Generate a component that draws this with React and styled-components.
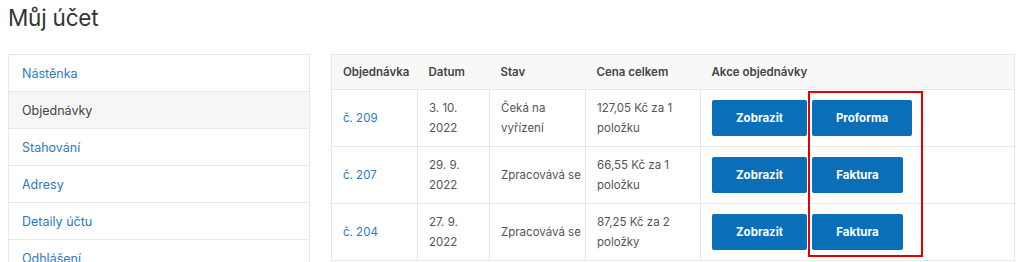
import React from 'react';
import styled, { createGlobalStyle } from 'styled-components';

const GlobalStyle = createGlobalStyle`
  html, body {
    margin: 0;
    padding: 0;
    background: #fff;
    overflow: hidden;
  }
  body {
    font-family: Inter, "Noto Sans", "Liberation Sans", sans-serif;
    color: #444;
  }
`;

const Page = styled.div`
  padding: 0 9px 0 8px;
`;

const Title = styled.h1`
  margin: 4px 0 22px;
  height: 28px;
  font-size: 22.5px;
  line-height: 28px;
  font-weight: 400;
  color: #333;
  letter-spacing: -0.2px;
`;

const Columns = styled.div`
  display: flex;
  align-items: flex-start;
  gap: 21px;
`;

const Sidebar = styled.nav`
  width: 302px;
  flex: none;
  border: 1px solid #e8e8e8;
  border-bottom: none;
  box-sizing: border-box;
`;

const NavItem = styled.a`
  display: flex;
  align-items: center;
  height: 36px;
  padding-left: 13px;
  border-bottom: 1px solid #e8e8e8;
  font-size: 12.5px;
  text-decoration: none;
  color: ${p => (p.$active ? '#444' : '#2b7bbd')};
  background: ${p => (p.$active ? '#f6f6f6' : '#fff')};
`;

const TableWrap = styled.div`
  position: relative;
  width: 684px;
  flex: none;
`;

const Table = styled.table`
  width: 100%;
  border-collapse: collapse;
  border: 1px solid #e8e8e8;
  table-layout: fixed;
  font-size: 11.5px;
`;

const Th = styled.th`
  height: 34px;
  padding: 0 11px;
  text-align: left;
  font-weight: 600;
  color: #444;
  background: #f8f8f8;
  border-bottom: 1px solid #e8e8e8;
`;

const Td = styled.td`
  height: 56px;
  padding: 0 11px;
  border: 1px solid #e8e8e8;
  color: #555;
  line-height: 20px;
  vertical-align: middle;
`;

const Line = styled.span`
  display: block;
  white-space: nowrap;
`;

const OrderLink = styled.a`
  color: #2b7bbd;
  text-decoration: none;
`;

const Actions = styled.div`
  display: flex;
  gap: 5px;
`;

const Button = styled.a`
  display: inline-flex;
  align-items: center;
  justify-content: center;
  height: 36px;
  width: ${p => p.$w}px;
  border-radius: 2px;
  background: #0a6fb8;
  color: #fff;
  font-weight: 700;
  font-size: 11.5px;
  text-decoration: none;
`;

const Highlight = styled.div`
  position: absolute;
  left: 477px;
  top: 37px;
  width: 115px;
  height: 166px;
  border: 2px solid #e40000;
  box-sizing: border-box;
  pointer-events: none;
`;

const navItems = ['Nástěnka', 'Objednávky', 'Stahování', 'Adresy', 'Detaily účtu', 'Odhlášení'];

const orders = [
  { id: 'č. 209', date: ['3. 10.', '2022'], status: ['Čeká na', 'vyřízení'], price: ['127,05 Kč za 1', 'položku'], doc: 'Proforma', docW: 100 },
  { id: 'č. 207', date: ['29. 9.', '2022'], status: ['Zpracovává se'], price: ['66,55 Kč za 1', 'položku'], doc: 'Faktura', docW: 91 },
  { id: 'č. 204', date: ['27. 9.', '2022'], status: ['Zpracovává se'], price: ['87,25 Kč za 2', 'položky'], doc: 'Faktura', docW: 91 },
];

const lines = arr => arr.map((l, i) => <Line key={i}>{l}</Line>);

export default function App() {
  return (
    <Page>
      <GlobalStyle />
      <Title>Můj účet</Title>
      <Columns>
        <Sidebar>
          {navItems.map(item => (
            <NavItem key={item} href="#" $active={item === 'Objednávky'}>{item}</NavItem>
          ))}
        </Sidebar>
        <TableWrap>
          <Table>
            <colgroup>
              <col style={{ width: 86 }} />
              <col style={{ width: 72 }} />
              <col style={{ width: 96 }} />
              <col style={{ width: 115 }} />
              <col />
            </colgroup>
            <thead>
              <tr>
                <Th>Objednávka</Th>
                <Th>Datum</Th>
                <Th>Stav</Th>
                <Th>Cena celkem</Th>
                <Th>Akce objednávky</Th>
              </tr>
            </thead>
            <tbody>
              {orders.map(o => (
                <tr key={o.id}>
                  <Td><OrderLink href="#">{o.id}</OrderLink></Td>
                  <Td>{lines(o.date)}</Td>
                  <Td>{lines(o.status)}</Td>
                  <Td>{lines(o.price)}</Td>
                  <Td>
                    <Actions>
                      <Button href="#" $w={95}>Zobrazit</Button>
                      <Button href="#" $w={o.docW}>{o.doc}</Button>
                    </Actions>
                  </Td>
                </tr>
              ))}
            </tbody>
          </Table>
          <Highlight />
        </TableWrap>
      </Columns>
    </Page>
  );
}
